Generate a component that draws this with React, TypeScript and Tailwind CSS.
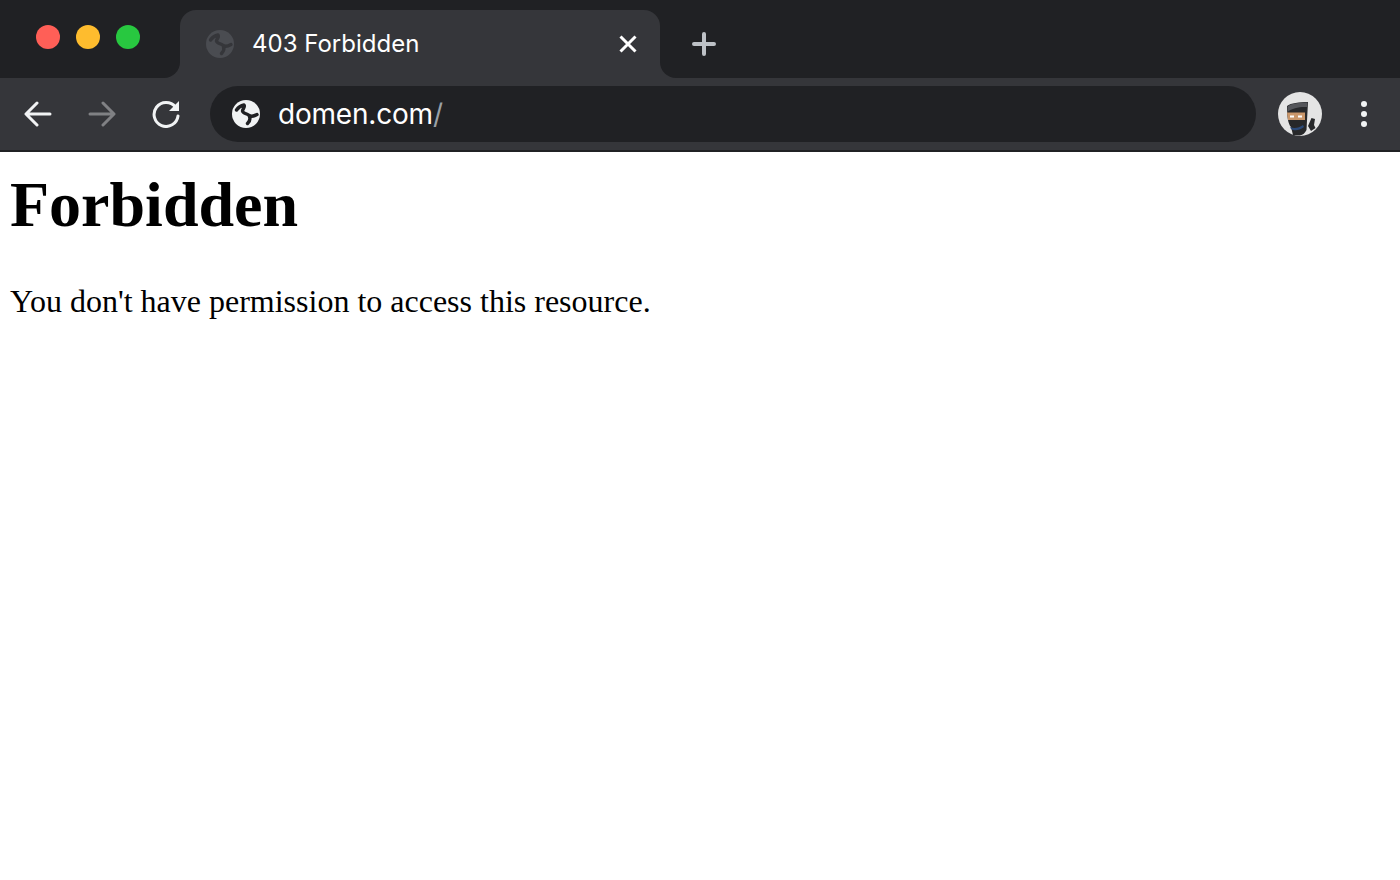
const Globe = ({ fg, bg, size }: { fg: string; bg: string; size: number }) => (
  <svg width={size} height={size} viewBox="0 0 28 28">
    <circle cx="14" cy="14" r="14" fill={fg} />
    <path
      d="M4.5 10 C6.5 7 9 5.5 12 5 C13.5 7 10.5 9 10.5 11 C11 13.5 14.5 13.5 16.5 15 C18 16.5 20 17.5 25 14.5 M17.5 16.5 C18.5 19 17.5 21.5 15.5 23.5"
      fill="none"
      stroke={bg}
      strokeWidth="3.4"
      strokeLinecap="round"
      strokeLinejoin="round"
    />
  </svg>
);

const Ninja = () => (
  <svg width="44" height="44" viewBox="0 0 44 44">
    <circle cx="22" cy="22" r="22" fill="#e4e4e4" />
    <path d="M9 14 C13 11 21 10 30 10 L28.5 38 C27 41 25 43 22 43.5 L15 43 L13 35 C10 32 9 24 9 14 Z" fill="#27282a" />
    <path d="M9.5 14.5 C13 11.5 21 10.5 29.5 10.5 L29 15 C22 14.5 14 16 9.5 20 Z" fill="#55565a" />
    <path d="M9 20.5 H27 V28 H10 Z" fill="#c9966a" />
    <rect x="12" y="23.5" width="4" height="2" fill="#fff" />
    <rect x="20" y="23.5" width="4" height="2" fill="#fff" />
    <path d="M12 35 C16 37 21 36 25 33 L26 35 C21 39 16 39 13 37 Z" fill="#2c4a78" />
    <path d="M30 34 L33.5 26 L37 27 L36 33 L37.5 36 L33 39 Z" fill="#27282a" />
  </svg>
);

export default function App() {
  return (
    <div className="min-h-screen bg-white">
      {/* Tab strip */}
      <div className="flex h-[78px] bg-[#35363a]">
        <div className="flex w-[180px] items-start gap-[16px] rounded-br-[16px] bg-[#202124] pl-[36px] pt-[25px]">
          <span className="h-6 w-6 rounded-full bg-[#ff5f57]" />
          <span className="h-6 w-6 rounded-full bg-[#febc2e]" />
          <span className="h-6 w-6 rounded-full bg-[#28c840]" />
        </div>
        <div className="w-[480px] bg-[#202124] pt-[10px]">
          <div className="flex h-[68px] items-center rounded-t-[16px] bg-[#35363a] pl-[26px] pr-[22px]">
            <Globe fg="#4a4c51" bg="#35363a" size={28} />
            <span className="ml-[18px] flex-1 font-['Inter',sans-serif] text-[24px] leading-none text-white">403 Forbidden</span>
            <svg width="20" height="20" viewBox="0 0 20 20" fill="none" stroke="#fff" strokeWidth="3">
              <path d="M2.5 2.5 L17.5 17.5 M17.5 2.5 L2.5 17.5" />
            </svg>
          </div>
        </div>
        <div className="flex flex-1 items-center rounded-bl-[16px] bg-[#202124] pl-[32px] pt-[10px]">
          <svg width="24" height="24" viewBox="0 0 24 24" fill="none" stroke="#bdc1c6" strokeWidth="4" strokeLinecap="round">
            <path d="M12 2 V22 M2 12 H22" />
          </svg>
        </div>
      </div>
      {/* Toolbar */}
      <div className="flex h-[74px] items-center border-b-2 border-[#202124] bg-[#35363a]">
        <div className="flex w-[210px] items-center pl-[24px]">
          <svg width="28" height="26" viewBox="0 0 28 26" fill="none" stroke="#f1f3f4" strokeWidth="3" strokeLinecap="round" strokeLinejoin="round">
            <path d="M26 13 H3 M13 2 L2 13 L13 24" />
          </svg>
          <svg className="ml-[36px]" width="28" height="26" viewBox="0 0 28 26" fill="none" stroke="#808184" strokeWidth="3" strokeLinecap="round" strokeLinejoin="round">
            <path d="M2 13 H25 M15 2 L26 13 L15 24" />
          </svg>
          <svg className="ml-[36px]" width="28" height="28" viewBox="0 0 28 28" fill="none">
            <path d="M23.5 7 A12 12 0 1 0 26 16" stroke="#f1f3f4" strokeWidth="3" strokeLinecap="round" />
            <path d="M27 1 V11 H17 Z" fill="#f1f3f4" />
          </svg>
        </div>
        <div className="flex h-[56px] w-[1046px] items-center rounded-full bg-[#202124] pl-[22px]">
          <Globe fg="#f1f3f4" bg="#202124" size={28} />
          <span className="ml-[18px] font-['Inter',sans-serif] text-[28px] leading-none tracking-[-0.2px] text-white">
            domen.com<span className="text-[#9aa0a6]">/</span>
          </span>
        </div>
        <div className="ml-[22px]">
          <Ninja />
        </div>
        <div className="ml-[39px] flex flex-col gap-[4px]">
          <span className="h-[6px] w-[6px] rounded-full bg-[#f1f3f4]" />
          <span className="h-[6px] w-[6px] rounded-full bg-[#f1f3f4]" />
          <span className="h-[6px] w-[6px] rounded-full bg-[#f1f3f4]" />
        </div>
      </div>
      {/* Page */}
      <div className="px-[10px] font-['Liberation_Serif',serif] text-black">
        <h1 className="mt-[16px] text-[64px] font-bold leading-[74px]">Forbidden</h1>
        <p className="mt-[41px] text-[32px] leading-[37px]">You don't have permission to access this resource.</p>
      </div>
    </div>
  );
}
